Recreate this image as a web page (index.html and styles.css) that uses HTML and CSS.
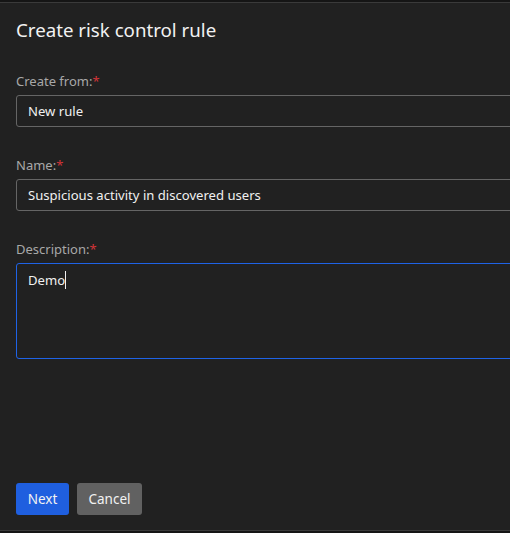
FILE: index.html
```html
<!DOCTYPE html>
<html>
    <head>
        <meta charset="UTF-8"/>
        <meta name="viewport" content="width=device-width, initial-scale=1.0"/>
        <title>Create risk control rule</title>
        <link rel="stylesheet" href="styles.css">
    </head>
    <body>
        <div class="frame">
            <div class="panel">
                <h1 class="title">Create risk control rule</h1>

                <div class="field">
                    <label>Create from:<span class="req">*</span></label>
                    <div class="input">New rule</div>
                </div>

                <div class="field">
                    <label>Name:<span class="req">*</span></label>
                    <div class="input">Suspicious activity in discovered users</div>
                </div>

                <div class="field">
                    <label>Description:<span class="req">*</span></label>
                    <div class="textarea">Demo<span class="caret"></span></div>
                </div>

                <div class="actions">
                    <button class="btn btn-primary">Next</button>
                    <button class="btn btn-secondary">Cancel</button>
                </div>
            </div>
        </div>
    </body>
</html>
```

FILE: styles.css
```css
html, body {
    margin: 0;
    padding: 0;
    overflow: hidden;
    background: #151515;
}

body {
    font-family: "Noto Sans", "Open Sans", sans-serif;
    color: #f0f0f0;
}

.frame {
    height: 533px;
    padding-top: 2px;
    box-sizing: border-box;
    background: #151515;
}

.panel {
    height: 529px;
    box-sizing: border-box;
    border-top: 1px solid #3a3a3a;
    border-bottom: 1px solid #3a3a3a;
    background: #212121;
    padding: 13px 0 15px 16px;
    display: flex;
    flex-direction: column;
}

.title {
    margin: 0 0 27px 0;
    font-size: 18.7px;
    font-weight: normal;
    line-height: 28px;
    color: #f2f2f2;
}

.field {
    display: flex;
    flex-direction: column;
    margin-bottom: 28px;
}

.field label {
    font-size: 13px;
    line-height: 20px;
    color: #a8a8a8;
    margin-bottom: 4px;
}

.req {
    color: #d13438;
}

.input {
    width: 520px;
    height: 32px;
    box-sizing: border-box;
    border: 1px solid #656565;
    border-radius: 3px;
    padding: 0 11px;
    font-size: 13.1px;
    line-height: 30px;
    color: #f0f0f0;
}

.textarea {
    width: 520px;
    height: 96px;
    box-sizing: border-box;
    border: 1px solid #1f63e6;
    border-radius: 3px;
    padding: 5px 11px;
    font-size: 13.1px;
    line-height: 22px;
    color: #f0f0f0;
}

.caret {
    display: inline-block;
    width: 1px;
    height: 18px;
    background: #f0f0f0;
    vertical-align: -4px;
}

.actions {
    margin-top: auto;
    display: flex;
    gap: 8px;
}

.btn {
    height: 32px;
    border: none;
    border-radius: 3px;
    font-family: inherit;
    font-size: 13.5px;
    color: #f2f2f2;
    cursor: pointer;
}

.btn-primary {
    background: #1f5fdf;
    width: 53px;
    padding: 0;
}

.btn-secondary {
    background: #616161;
    width: 65px;
    padding: 0;
}
```
